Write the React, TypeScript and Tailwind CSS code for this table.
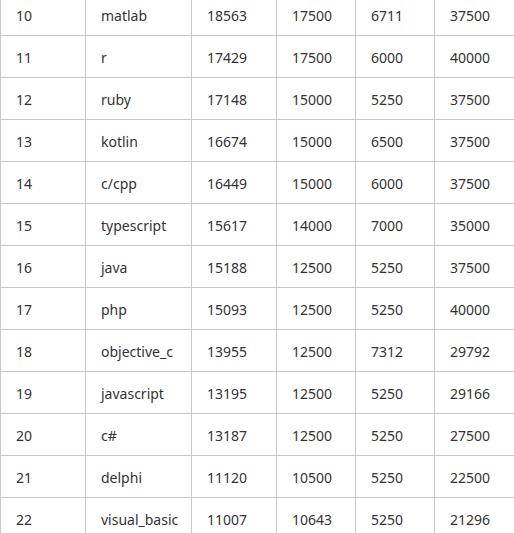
const rows: [number, string, number, number, number, number][] = [
  [10, "matlab", 18563, 17500, 6711, 37500],
  [11, "r", 17429, 17500, 6000, 40000],
  [12, "ruby", 17148, 15000, 5250, 37500],
  [13, "kotlin", 16674, 15000, 6500, 37500],
  [14, "c/cpp", 16449, 15000, 6000, 37500],
  [15, "typescript", 15617, 14000, 7000, 35000],
  [16, "java", 15188, 12500, 5250, 37500],
  [17, "php", 15093, 12500, 5250, 40000],
  [18, "objective_c", 13955, 12500, 7312, 29792],
  [19, "javascript", 13195, 12500, 5250, 29166],
  [20, "c#", 13187, 12500, 5250, 27500],
  [21, "delphi", 11120, 10500, 5250, 22500],
  [22, "visual_basic", 11007, 10643, 5250, 21296],
];

export default function App() {
  return (
    <div className="w-[514px] h-[533px] overflow-hidden bg-white">
      <table
        className="-mt-[7px] w-[514px] table-fixed border-collapse text-[14px] text-[#333]"
        style={{ fontFamily: '"Noto Sans", "Open Sans", sans-serif' }}
      >
        <colgroup>
          <col className="w-[85px]" />
          <col className="w-[106px]" />
          <col className="w-[85px]" />
          <col className="w-[79px]" />
          <col className="w-[79px]" />
          <col className="w-[80px]" />
        </colgroup>
        <tbody>
          {rows.map((r) => (
            <tr key={r[0]} className="h-[42px]">
              {r.map((c, i) => (
                <td key={i} className="border border-[#c8c8c8] pl-[15px] pr-[10px] pt-[2px] pb-0 align-middle">
                  {c}
                </td>
              ))}
            </tr>
          ))}
        </tbody>
      </table>
    </div>
  );
}
